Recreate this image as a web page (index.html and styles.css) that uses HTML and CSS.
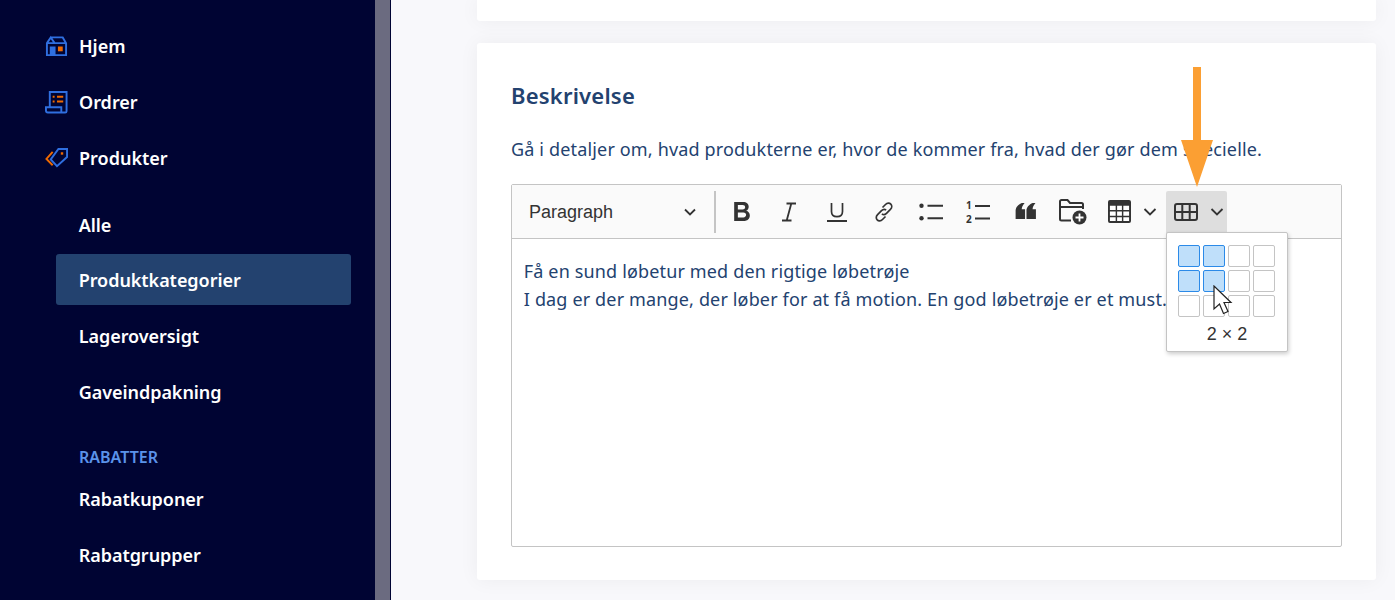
FILE: index.html
```html
<!DOCTYPE html>
<html lang="da">
<head>
<meta charset="utf-8">
<title>Beskrivelse</title>
<link rel="stylesheet" href="styles.css">
</head>
<body>
<div class="app">
  <aside class="sidebar">
    <nav class="nav">
      <a class="nav-top">
        <svg class="nav-icon" viewBox="0 0 24 24" fill="none"><path d="M2 21V8.500L6 2.500h12.500l3.500 6v12.500z M2 8.500L6 2.500l4 6h12 M10 8.500H2" stroke="#2f6fe0" stroke-width="2"/><rect x="5" y="12" width="6" height="9" fill="#2f6fe0"/><rect x="13.500" y="12" width="5" height="5" fill="#f06a00"/></svg>
        <span>Hjem</span>
      </a>
      <a class="nav-top">
        <svg class="nav-icon" viewBox="0 0 24 24" fill="none"><path d="M5 17V1h17.500v20c0 1-.5 1.500-1.500 1.500H3c-1 0-2-.8-2-2.200V17h16v5" stroke="#2f6fe0" stroke-width="2"/><path d="M8 6h2M8 11h2M12.500 6H19M12.500 11H19" stroke="#f06a00" stroke-width="2.200"/></svg>
        <span>Ordrer</span>
      </a>
      <a class="nav-top">
        <svg class="nav-icon" viewBox="0 0 24 24" fill="none"><path d="M8 5L1.500 12.500 8 19" stroke="#f06a00" stroke-width="2"/><path d="M14 2h9v8.500L12.500 20 6 13z" stroke="#2f6fe0" stroke-width="2"/><rect x="16.500" y="5.500" width="2.500" height="2.500" fill="#f06a00"/></svg>
        <span>Produkter</span>
      </a>
      <div class="nav-sub">
        <a class="nav-item">Alle</a>
        <a class="nav-item active">Produktkategorier</a>
        <a class="nav-item">Lageroversigt</a>
        <a class="nav-item">Gaveindpakning</a>
      </div>
      <div class="nav-heading">RABATTER</div>
      <a class="nav-item">Rabatkuponer</a>
      <a class="nav-item">Rabatgrupper</a>
    </nav>
  </aside>
  <div class="gutter"></div>
  <main class="main">
    <section class="card card-stub"></section>
    <section class="card card-desc">
      <h2 class="title">Beskrivelse</h2>
      <p class="lead">Gå i detaljer om, hvad produkterne er, hvor de kommer fra, hvad der gør dem specielle.</p>
      <div class="editor">
        <div class="toolbar">
          <div class="select">
            <span>Paragraph</span>
            <svg class="chev" viewBox="0 0 14 14" fill="none"><path d="M2 4.500l5 5 5-5" stroke="#333" stroke-width="1.800"/></svg>
          </div>
          <span class="sep"></span>
          <button class="tool t-b"><svg viewBox="3 1.500 14 17"><path fill-rule="evenodd" fill="#333" d="M3 1.500h8c3 0 5 1.600 5 4.300 0 1.700-.9 3-2.300 3.600 2 .5 3.300 2 3.300 4.200 0 3-2.200 4.900-5.500 4.900H3zM6.300 4.200v4h4.200c1.500 0 2.300-.8 2.300-2s-.8-2-2.300-2zm0 6.600v4.500h4.900c1.600 0 2.500-.9 2.500-2.300s-.9-2.200-2.500-2.200z"/></svg></button>
          <button class="tool t-i"><svg viewBox="0 0 20 20"><path fill="none" stroke="#333" stroke-width="1.800" d="M7.500 1.500h9.500M3 18.500h9.500M12.300 1.500L7.700 18.500"/></svg></button>
          <button class="tool t-u"><svg viewBox="0 0 20 20" fill="none"><path stroke="#333" stroke-width="1.700" d="M4.500 1V9.500c0 3.400 2 5.200 5.500 5.200s5.500-1.800 5.500-5.200V1"/><path stroke="#333" stroke-width="2" d="M0 19h20"/></svg></button>
          <button class="tool t-l"><svg viewBox="0 0 20 20" fill="none"><path stroke="#333" stroke-width="1.700" d="M8.500 5.500l3-3c1.700-1.700 4-1.700 5.300-.4 1.300 1.300 1.300 3.600-.4 5.300l-3.900 3.900c-1.500 1.500-3.400 1.700-4.600.6M11.500 14.500l-3 3c-1.700 1.700-4 1.700-5.300.4-1.300-1.300-1.300-3.600.4-5.300l3.900-3.900c1.500-1.500 3.400-1.700 4.600-.6"/></svg></button>
          <button class="tool t-list"><svg viewBox="0 0 24 20" fill="none"><circle cx="2.500" cy="3.700" r="2.200" fill="#333"/><circle cx="2.500" cy="16.300" r="2.200" fill="#333"/><path stroke="#333" stroke-width="2" d="M8.500 3.700H24M8.500 16.300H24"/></svg></button>
          <button class="tool t-num"><svg viewBox="0 0 24 28"><path stroke="#333" stroke-width="2" d="M9 8h15M9 20.500h15"/><text x="0" y="11" class="mini">1</text><text x="0" y="25" class="mini">2</text></svg></button>
          <button class="tool t-q"><svg viewBox="0 0 22 18"><path fill="#333" d="M6.500 0L9.500 0C7.500 2.500 6.500 4.500 6.500 6.500H10V17H0V8C0 4.500 3 1.500 6.500 0zM18 0h3C19 2.500 18 4.500 18 6.500h3.500V17h-10V8C11.500 4.500 14.500 1.500 18 0z"/></svg></button>
          <button class="tool t-f"><svg viewBox="0 0 28 26" fill="none"><path stroke="#333" stroke-width="2" d="M12 21.500H2.500c-.9 0-1.500-.6-1.500-1.500V2.500C1 1.600 1.600 1 2.500 1h6L11 4h11.500c.9 0 1.500.6 1.500 1.500V10M1 8h23"/><circle cx="20.500" cy="18.500" r="7" fill="#333"/><path stroke="#fff" stroke-width="1.800" d="M20.500 14.500v8M16.500 18.500h8"/></svg></button>
          <button class="tool t-t"><svg class="tbl" viewBox="0 0 24 24"><rect x="0" y="0" width="24" height="24" rx="2" fill="#333"/><path fill="#fff" d="M2 6h6v4.500H2zM9.500 6h5v4.500h-5zM16 6h6v4.500h-6zM2 12h6v4.500H2zM9.500 12h5v4.500h-5zM16 12h6v4.500h-6zM2 18h6v4H2zM9.500 18h5v4h-5zM16 18h6v4h-6z"/></svg><svg class="chev" viewBox="0 0 14 14" fill="none"><path d="M1.500 4l5.500 5.500L12.500 4" stroke="#333" stroke-width="1.800"/></svg></button>
          <div class="tool-wrap">
            <button class="tool t-on"><svg class="tbl2" viewBox="0 0 24 18" fill="none"><rect x="1" y="1" width="22" height="16" rx="2" stroke="#333" stroke-width="2"/><path stroke="#333" stroke-width="2" d="M1 9h22M8.300 1v16M15.700 1v16"/></svg><svg class="chev" viewBox="0 0 14 14" fill="none"><path d="M1.500 4l5.500 5.500L12.500 4" stroke="#333" stroke-width="1.800"/></svg></button>
            <div class="popup">
              <div class="grid">
                <i class="cell on"></i><i class="cell on"></i><i class="cell"></i><i class="cell"></i>
                <i class="cell on"></i><i class="cell on"></i><i class="cell"></i><i class="cell"></i>
                <i class="cell"></i><i class="cell"></i><i class="cell"></i><i class="cell"></i>
              </div>
              <div class="size">2 × 2</div>
              <svg class="cursor" viewBox="0 0 20 30"><path d="M1 1v23l5.500-5 4 9.500 4.500-2-4-9H18z" fill="#fff" stroke="#222" stroke-width="1.200"/></svg>
            </div>
          </div>
        </div>
        <div class="content">
          <p>Få en sund løbetur med den rigtige løbetrøje</p>
          <p>I dag er der mange, der løber for at få motion. En god løbetrøje er et must.</p>
        </div>
      </div>
    </section>
    <section class="card card-stub2"></section>
  </main>
</div>
<svg class="arrow" viewBox="0 0 32 122"><path d="M12 1h8v73h12L16 121 0 74h12z" fill="#fb9f33"/></svg>
</body>
</html>
```
FILE: styles.css
```css
* { box-sizing: border-box; }
html, body { margin: 0; height: 600px; overflow: hidden; }
body { font-family: "Noto Sans", "Open Sans", sans-serif; position: relative; background: #f8f8fb; }
.app { display: flex; height: 600px; }
.sidebar { width: 375px; flex: none; background: #000433; padding: 18px 24px 0 56px; color: #fff; }
.gutter { width: 16px; flex: none; background: #6b6b80; border-right: 1px solid #000433; }
.nav { display: flex; flex-direction: column; }
.nav-top { height: 56px; display: flex; align-items: center; gap: 11px; margin-left: -11px; font-size: 18px; font-weight: 600; }
.nav-icon { width: 23px; height: 23px; flex: none; }
.nav-sub { margin-top: 12.300px; display: flex; flex-direction: column; }
.nav-item { display: flex; align-items: center; height: 51px; margin-bottom: 4.700px; padding: 2px 0 0 22.700px; font-size: 18px; font-weight: 600; letter-spacing: -0.05px; border-radius: 3px; }
.nav-item.active { background: #23426f; }
.nav-heading { color: #5b93ea; font-size: 16px; font-weight: 600; padding-left: 23px; margin-top: 22px; margin-bottom: 1.300px; height: 28px; line-height: 28px; }
.main { flex: 1; padding-left: 86px; padding-right: 19px; display: flex; flex-direction: column; gap: 22px; min-width: 0; }
.card { background: #fff; border-radius: 3px; box-shadow: 0 0 20px rgba(0, 0, 0, 0.05); flex: none; }
.card-stub { height: 21px; border-radius: 0 0 3px 3px; }
.card-desc { height: 537px; padding: 33px 34px 33px; }
.card-stub2 { height: 0; margin-top: -2px; }
.title { margin: 0; font-size: 22px; line-height: 38px; font-weight: 600; color: #23426f; letter-spacing: 0.2px; }
.lead { margin: 21px 0 0; font-size: 18px; line-height: 28px; color: #23426f; white-space: nowrap; letter-spacing: 0.16px; }
.editor { margin-top: 21px; height: 363px; border: 1px solid #c4c4c4; border-radius: 2px; display: flex; flex-direction: column; }
.toolbar { height: 54px; flex: none; background: #fafafa; border-bottom: 1px solid #c4c4c4; display: flex; align-items: center; padding: 0 0 0 7px; }
.select { width: 195px; height: 42px; display: flex; align-items: center; justify-content: space-between; padding: 1px 17px 0 10px; font-family: "Liberation Sans", Arial, sans-serif; font-size: 18px; color: #333; }
.chev { width: 14px; height: 14px; flex: none; }
.sep { width: 2px; height: 42px; background: #c4c4c4; flex: none; }
.tool { appearance: none; border: 0; background: none; padding: 0; height: 42px; display: flex; align-items: center; justify-content: center; flex: none; }
.tool svg { display: block; }
.t-b { width: 51px; } .t-b svg { width: 18px; height: 19px; }
.t-i { width: 44px; } .t-i svg { width: 20px; height: 20px; }
.t-u { width: 52px; } .t-u svg { width: 20px; height: 20px; }
.t-l { width: 42px; } .t-l svg { width: 20px; height: 20px; }
.t-list { width: 52px; } .t-list svg { width: 24px; height: 20px; }
.t-num { width: 42px; } .t-num svg { width: 24px; height: 28px; }
.mini { font-family: "Noto Sans", sans-serif; font-size: 10px; font-weight: 700; fill: #333; }
.t-q { width: 54px; } .t-q svg { width: 22px; height: 17px; }
.t-f { width: 40px; } .t-f svg { width: 28px; height: 26px; }
.t-t { width: 73px; gap: 12px; justify-content: flex-start; padding-left: 15px; } .t-t .tbl { width: 23px; height: 23px; }
.tool-wrap { position: relative; height: 42px; }
.t-on { width: 61px; background: #dedede; border-radius: 2px 2px 0 0; gap: 12px; justify-content: flex-start; padding-left: 8px; }
.t-on .tbl2 { width: 24px; height: 18px; }
.popup { position: absolute; top: 41px; left: 0; width: 122px; height: 120px; background: #fff; border: 1px solid #c4c4c4; border-radius: 2px; box-shadow: 1px 2px 4px rgba(0, 0, 0, 0.2); padding: 12px 0 0 11px; z-index: 5; }
.grid { display: grid; grid-template-columns: repeat(4, 22px); grid-auto-rows: 22px; gap: 3px; }
.cell { display: block; border: 1px solid #c4c4c4; border-radius: 2px; background: #fff; }
.cell.on { background: #bfdffa; border-color: #2b8ae8; }
.size { font-family: "Liberation Sans", Arial, sans-serif; font-size: 18px; color: #333; text-align: center; margin: 6px 0 0 -11px; line-height: 22px; }
.cursor { position: absolute; left: 46px; top: 52px; width: 20px; height: 30px; }
.content { padding: 18px 11.800px; font-size: 18px; color: #23426f; line-height: 28px; letter-spacing: 0.15px; }
.content p { margin: 0; white-space: nowrap; }
.arrow { position: absolute; left: 1181px; top: 66px; width: 32px; height: 122px; z-index: 10; }
```
